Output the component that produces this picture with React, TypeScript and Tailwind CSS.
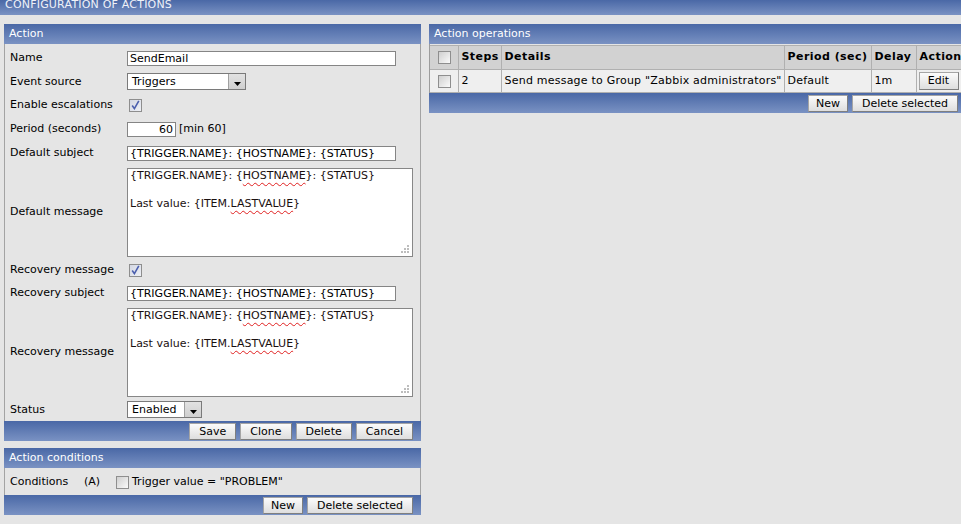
import React from "react";

const grad = "bg-gradient-to-b from-[#4a68a6] to-[#7a92c3]";

function Checkbox({ checked = false }: { checked?: boolean }) {
  return (
    <span
      className={
        "inline-flex w-[13px] h-[13px] shrink-0 border border-[#8e8e8e] items-center justify-center " +
        (checked
          ? "bg-gradient-to-br from-[#d3d7e3] to-[#eef0f5]"
          : "bg-gradient-to-br from-[#cfcfcf] to-[#fafafa]")
      }
    >
      {checked && (
        <svg width="9" height="10" viewBox="0 0 9 10">
          <path d="M1.2 5.5 L3.4 8.6 L7.8 0.8" stroke="#4b5fae" strokeWidth="1.6" fill="none" />
        </svg>
      )}
    </span>
  );
}

function Btn({ children, px = "px-[9px]" }: { children: React.ReactNode; px?: string }) {
  return (
    <span
      className={
        px +
        " h-[17px] border border-[#a5a5a5] border-b-[#7f7f7f] border-r-[#7f7f7f] bg-gradient-to-b from-[#fbfbfb] to-[#dedede] text-[11px] leading-none text-black flex items-center justify-center"
      }
    >
      {children}
    </span>
  );
}

function Header({ title }: { title: string }) {
  return (
    <div className={grad + " h-[20px] flex items-center pl-[5px] pt-[1px] text-white text-[11px]"}>{title}</div>
  );
}

function Footer({ children }: { children: React.ReactNode }) {
  return <div className={grad + " h-[20px] flex justify-end items-center gap-[4px] pr-[8px]"}>{children}</div>;
}

function Input({ value, w }: { value: string; w: string }) {
  return (
    <div className={w + " h-[15px] border border-[#858585] bg-white pl-[2px] text-[11px] leading-[13px] whitespace-nowrap overflow-hidden"}>
      {value}
    </div>
  );
}

function Select({ value, w }: { value: string; w: string }) {
  return (
    <div className={w + " h-[17px] flex border border-[#7a7a7a] bg-white"}>
      <span className="flex-1 pl-[4px] text-[11px] leading-[15px]">{value}</span>
      <span className="w-[17px] bg-gradient-to-b from-[#e2e2e2] to-[#cfcfcf] border-l border-[#a0a0a0] flex items-end justify-center pb-[3px]">
        <svg width="7" height="4" viewBox="0 0 7 4">
          <path d="M0 0H7L3.5 4Z" fill="#000" />
        </svg>
      </span>
    </div>
  );
}

function Wavy({ children }: { children: React.ReactNode }) {
  return (
    <span className="underline decoration-wavy decoration-[#e02020] decoration-1 underline-offset-[3px]">
      {children}
    </span>
  );
}

function TextArea() {
  return (
    <div className="relative w-[286px] h-[89px] border border-[#878787] bg-white pl-[2px] text-[11px] leading-[14px] text-[#1a1010]">
      <div>
        {"{TRIGGER.NAME}: {"}
        <Wavy>HOSTNAME</Wavy>
        {"}: {STATUS}"}
      </div>
      <div>&nbsp;</div>
      <div>
        {"Last value: {ITEM."}
        <Wavy>LASTVALUE</Wavy>
        {"}"}
      </div>
      <svg className="absolute right-[3px] bottom-[3px]" width="8" height="8" viewBox="0 0 8 8">
        <g fill="#bdbdbd">
          <rect x="6" y="0" width="2" height="2" />
          <rect x="3" y="3" width="2" height="2" />
          <rect x="6" y="3" width="2" height="2" />
          <rect x="0" y="6" width="2" height="2" />
          <rect x="3" y="6" width="2" height="2" />
          <rect x="6" y="6" width="2" height="2" />
        </g>
      </svg>
    </div>
  );
}

function Row({ label, h, children }: { label: string; h: string; children: React.ReactNode }) {
  return (
    <div className={"flex items-center " + h}>
      <div className="w-[122px] pl-[5px] pt-[1px] text-[11px] text-black">{label}</div>
      <div className="flex items-center">{children}</div>
    </div>
  );
}

const cell = "border border-[#b0b0b0] text-left pl-[3px] whitespace-nowrap";

export default function App() {
  return (
    <div className="w-[961px] h-[524px] overflow-hidden bg-[#e5e5e5] font-['DejaVu_Sans',Verdana,sans-serif] text-[11px] text-black">
      <div className={grad + " h-[15px] overflow-hidden pl-[5px]"}>
        <div className="-mt-[1px] leading-[11px] text-[#eef1f8] tracking-[0.2px]">CONFIGURATION OF ACTIONS</div>
      </div>
      <div className="flex gap-[8px] pl-[4px] pt-[9px]">
        {/* Left column */}
        <div className="w-[417px] shrink-0 flex flex-col">
          <Header title="Action" />
          <div className="border-x border-[#a3a3a3] pt-[2px] pb-[1px]">
            <Row label="Name" h="h-[24px]">
              <Input value="SendEmail" w="w-[269px]" />
            </Row>
            <Row label="Event source" h="h-[23px]">
              <Select value="Triggers" w="w-[119px]" />
            </Row>
            <Row label="Enable escalations" h="h-[24px]">
              <span className="pl-[2px] flex">
                <Checkbox checked />
              </span>
            </Row>
            <Row label="Period (seconds)" h="h-[24px]">
              <div className="w-[49px] h-[15px] border border-[#858585] bg-white pr-[2px] text-right text-[11px] leading-[13px]">60</div>
              <span className="pl-[3px] pt-[1px]">[min 60]</span>
            </Row>
            <Row label="Default subject" h="h-[24px]">
              <Input value="{TRIGGER.NAME}: {HOSTNAME}: {STATUS}" w="w-[269px]" />
            </Row>
            <Row label="Default message" h="h-[94px]">
              <TextArea />
            </Row>
            <Row label="Recovery message" h="h-[22px]">
              <span className="pl-[2px] flex">
                <Checkbox checked />
              </span>
            </Row>
            <Row label="Recovery subject" h="h-[24px]">
              <Input value="{TRIGGER.NAME}: {HOSTNAME}: {STATUS}" w="w-[269px]" />
            </Row>
            <Row label="Recovery message" h="h-[94px]">
              <TextArea />
            </Row>
            <Row label="Status" h="h-[21px]">
              <Select value="Enabled" w="w-[75px]" />
            </Row>
          </div>
          <Footer>
            <Btn>Save</Btn>
            <Btn>Clone</Btn>
            <Btn>Delete</Btn>
            <Btn>Cancel</Btn>
          </Footer>

          <div className="mt-[7px]">
            <Header title="Action conditions" />
            <div className="border-x border-[#a3a3a3] h-[27px] flex items-center pl-[5px] pt-[2px]">
              <span className="w-[74px]">Conditions</span>
              <span className="w-[32px]">(A)</span>
              <Checkbox />
              <span className="pl-[3px]">Trigger value = "PROBLEM"</span>
            </div>
            <Footer>
              <Btn px="px-[7px]">New</Btn>
              <Btn>Delete selected</Btn>
            </Footer>
          </div>
        </div>

        {/* Right column */}
        <div className="w-[537px] shrink-0 flex flex-col">
          <Header title="Action operations" />
          <div className="border-l border-[#9c9c9c] pt-[1px]">
            <table className="table-fixed border-collapse w-full text-[11px]">
              <colgroup>
                <col className="w-[28px]" />
                <col className="w-[43px]" />
                <col className="w-[283px]" />
                <col className="w-[87px]" />
                <col className="w-[45px]" />
                <col />
              </colgroup>
              <thead>
                <tr className="h-[24px] bg-[#d2d2d2] font-bold tracking-[0.45px]">
                  <th className="border border-[#b0b0b0] border-l-0 pl-[1px]">
                    <span className="flex justify-center">
                      <Checkbox />
                    </span>
                  </th>
                  <th className={cell}>Steps</th>
                  <th className={cell}>Details</th>
                  <th className={cell}>Period (sec)</th>
                  <th className={cell}>Delay</th>
                  <th className={cell}>Action</th>
                </tr>
              </thead>
              <tbody>
                <tr className="h-[23px] bg-[#efefef]">
                  <td className="border border-[#b0b0b0] border-l-0 pl-[1px]">
                    <span className="flex justify-center">
                      <Checkbox />
                    </span>
                  </td>
                  <td className={cell}>2</td>
                  <td className={cell + " tracking-[0.22px]"}>Send message to Group "Zabbix administrators"</td>
                  <td className={cell + " tracking-[0.2px]"}>Default</td>
                  <td className={cell}>1m</td>
                  <td className="border border-[#b0b0b0] pl-[2px]">
                    <span className="inline-flex w-[40px]">
                      <span className="w-full h-[18px] border border-[#a5a5a5] border-b-[#7f7f7f] border-r-[#7f7f7f] bg-gradient-to-b from-[#fbfbfb] to-[#dedede] flex items-center justify-center">
                        Edit
                      </span>
                    </span>
                  </td>
                </tr>
              </tbody>
            </table>
          </div>
          <Footer>
            <Btn px="px-[7px]">New</Btn>
            <Btn>Delete selected</Btn>
          </Footer>
        </div>
      </div>
    </div>
  );
}
